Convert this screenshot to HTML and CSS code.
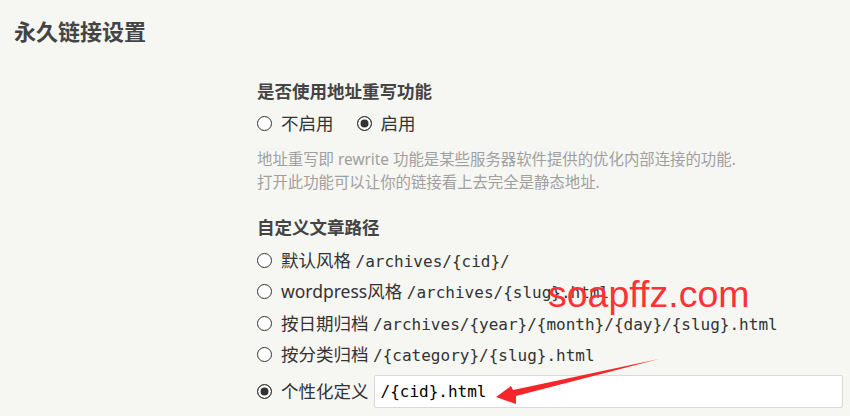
FILE: index.html
```html
<!DOCTYPE html>
<html lang="zh-CN">
<head>
    <meta charset="UTF-8">
    <meta name="viewport" content="width=device-width, initial-scale=1.0">
    <title>永久链接设置</title>
    <link rel="stylesheet" href="styles.css">
</head>
<body>

    <div class="settings-page">
        <h2 class="page-title">永久链接设置</h2>

        <div class="settings-form">
            <!-- rewrite switch -->
            <div class="field">
                <label class="field-label">是否使用地址重写功能</label>
                <div class="radio-row">
                    <label class="radio"><input type="radio" name="rewrite">不启用</label>
                    <label class="radio"><input type="radio" name="rewrite" checked>启用</label>
                </div>
                <p class="field-desc">地址重写即 rewrite 功能是某些服务器软件提供的优化内部连接的功能.<br>打开此功能可以让你的链接看上去完全是静态地址.</p>
            </div>

            <!-- post path -->
            <div class="field">
                <label class="field-label">自定义文章路径</label>
                <ul class="option-list">
                    <li><label class="radio"><input type="radio" name="postPattern">默认风格 <code>/archives/{cid}/</code></label></li>
                    <li><label class="radio"><input type="radio" name="postPattern">wordpress风格 <code>/archives/{slug}.html</code></label></li>
                    <li><label class="radio"><input type="radio" name="postPattern">按日期归档 <code>/archives/{year}/{month}/{day}/{slug}.html</code></label></li>
                    <li><label class="radio"><input type="radio" name="postPattern">按分类归档 <code>/{category}/{slug}.html</code></label></li>
                    <li class="custom-option">
                        <label class="radio"><input type="radio" name="postPattern" checked>个性化定义</label>
                        <input type="text" class="text-input" value="/{cid}.html">
                    </li>
                </ul>
            </div>
        </div>

        <!-- screenshot annotations -->
        <div class="watermark">soapffz.com</div>
        <svg class="arrow" width="170" height="50" viewBox="490 355 170 50">
            <polygon points="496,397 511,386 513,390 659,359 516,396 516,404" fill="#f5262a"/>
        </svg>
    </div>

</body>
</html>
```

FILE: styles.css
```css
body {
    margin: 0;
    background-color: #f6f6f3;
    font-family: "Noto Sans", "Noto Sans CJK SC", sans-serif;
    color: #333;
}
.settings-page {
    position: relative;
    height: 416px;
    padding: 16px 0 0 14px;
    box-sizing: border-box;
    overflow: hidden;
}
.page-title {
    margin: 0;
    font-size: 22px;
    line-height: 30px;
    font-weight: bold;
    color: #444;
}
.settings-form {
    margin: 32px 0 0 243px;
}
.field-label {
    display: block;
    font-size: 17.5px;
    line-height: 26px;
    font-weight: bold;
    color: #444;
}
.field + .field {
    margin-top: 20px;
}
.radio-row {
    display: flex;
    gap: 23px;
    margin-top: 4px;
    height: 30px;
    align-items: center;
}
.radio {
    display: inline-block;
    font-size: 17.5px;
    line-height: 26px;
    white-space: nowrap;
}
.radio input {
    appearance: none;
    display: inline-block;
    width: 15px;
    height: 15px;
    margin: 0 9px 0 0;
    border: 1.5px solid #333;
    border-radius: 50%;
    background: #fff;
    box-sizing: border-box;
    vertical-align: -1px;
}
.radio input:checked {
    background: #333;
    box-shadow: inset 0 0 0 2.5px #fff;
}
.field-desc {
    margin: 10px 0 0;
    font-size: 15.4px;
    line-height: 23px;
    color: #a0a0a0;
}
.option-list {
    list-style: none;
    margin: 5px 0 0;
    padding: 0;
}
.option-list li {
    height: 31.5px;
    display: flex;
    align-items: center;
}
.option-list code {
    font-family: "DejaVu Sans Mono", monospace;
    font-size: 16px;
    color: #333;
}
.option-list .custom-option {
    margin-top: 4px;
    height: 32px;
}
.text-input {
    margin-left: 5px;
    width: 469px;
    height: 33px;
    box-sizing: border-box;
    border: 1px solid #d9d9d6;
    border-radius: 2px;
    padding: 0 6px;
    font-family: "DejaVu Sans Mono", monospace;
    font-size: 16px;
    color: #000;
    background: #fff;
}
.watermark {
    position: absolute;
    left: 548px;
    top: 272px;
    font-family: "Liberation Sans", sans-serif;
    font-size: 37.5px;
    line-height: 44px;
    color: #ff3236;
}
.arrow {
    position: absolute;
    left: 490px;
    top: 355px;
}
```
